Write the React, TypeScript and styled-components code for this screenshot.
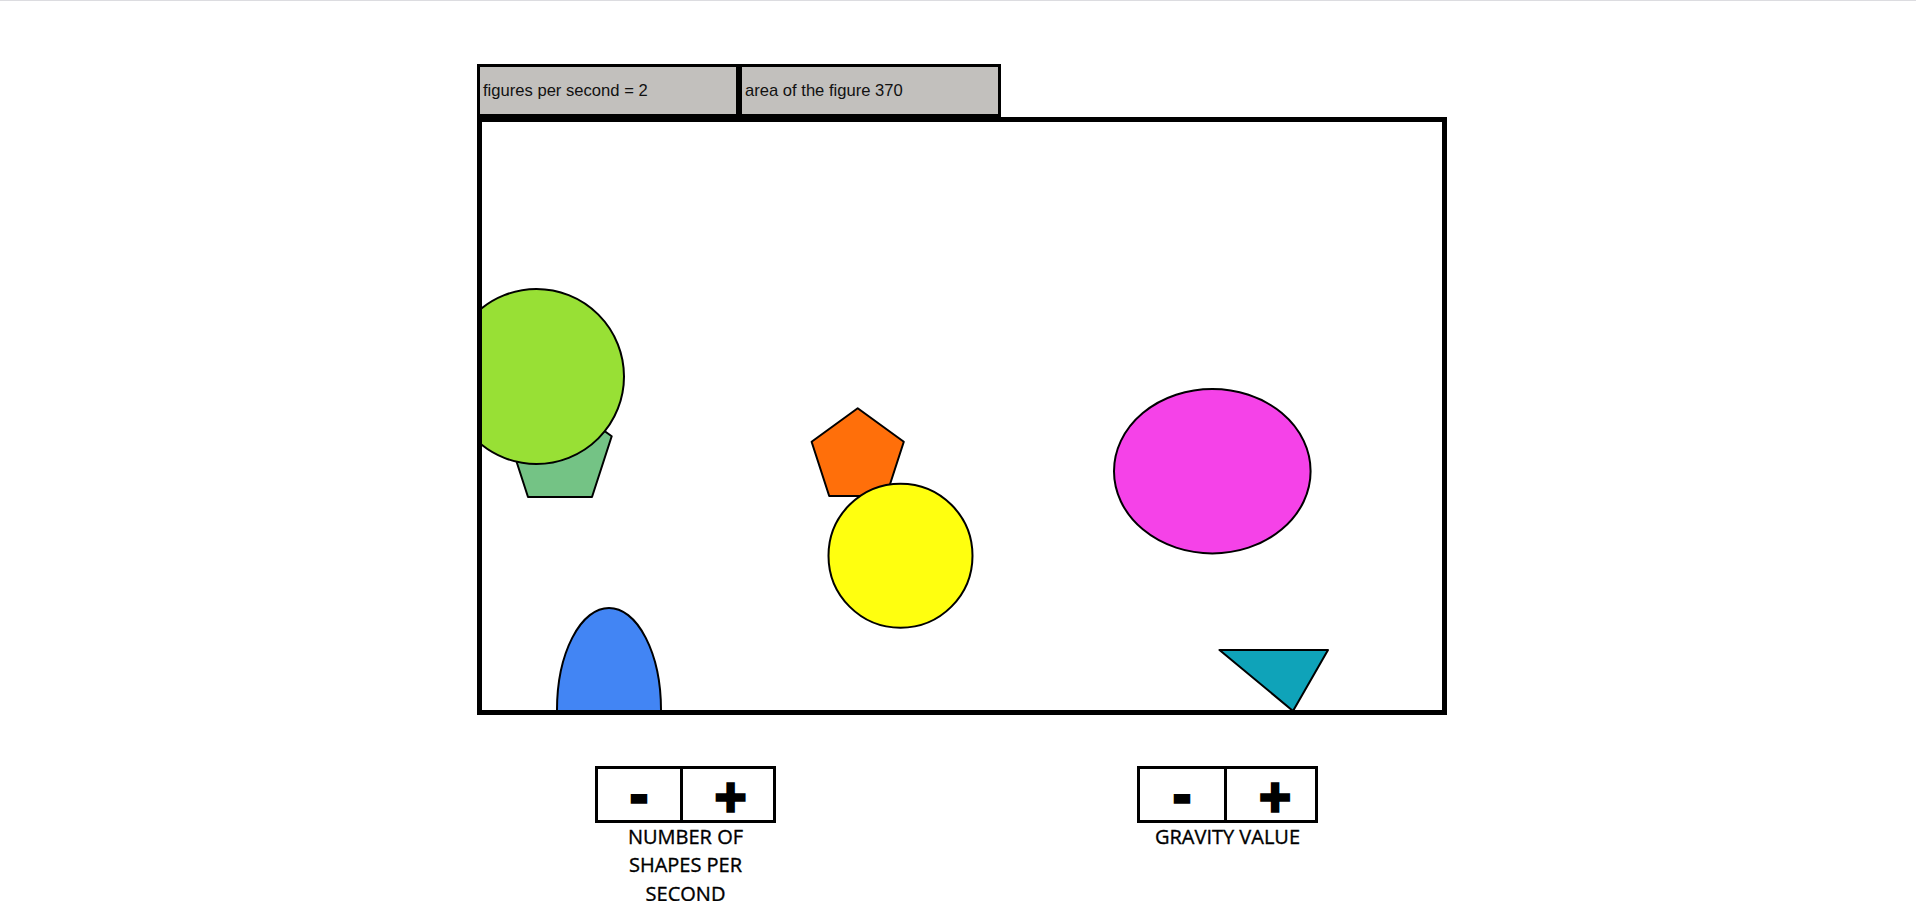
import React from "react";
import styled, { createGlobalStyle } from "styled-components";

const GlobalStyle = createGlobalStyle`
  html, body {
    margin: 0;
    padding: 0;
    background: #ffffff;
  }
  body {
    font-family: "Liberation Sans", Arial, sans-serif;
  }
`;

const TopRule = styled.div`
  height: 1px;
  background: #dcdce0;
`;

const Page = styled.main`
  padding: 63px 0 0 477px;
`;

const Stage = styled.section`
  width: 970px;
  display: flex;
  flex-direction: column;
`;

const InfoBar = styled.div`
  display: flex;
`;

const InfoBox = styled.div`
  box-sizing: border-box;
  width: 262px;
  height: 53px;
  border: 3px solid #000;
  background: #c2c0bd;
  display: flex;
  align-items: center;
  padding-left: 3px;
  font-family: "Liberation Sans", Arial, sans-serif;
  font-size: 16.6px;
  color: #111;
`;

const CanvasFrame = styled.div`
  box-sizing: border-box;
  width: 970px;
  height: 598px;
  border: 5px solid #000;
  background: #fff;
  overflow: hidden;
`;

const Controls = styled.div`
  display: flex;
  margin-top: 51px;
  padding-left: 118px;
  gap: 361px;
`;

const Control = styled.div`
  width: 181px;
  display: flex;
  flex-direction: column;
  align-items: center;
`;

const ButtonGroup = styled.div`
  box-sizing: border-box;
  width: 181px;
  height: 57px;
  border: 3px solid #000;
  display: flex;
`;

const StepButton = styled.button<{ $w: number; $divider?: boolean; $shift?: number }>`
  width: ${(p) => p.$w}px;
  height: 100%;
  box-sizing: border-box;
  margin: 0;
  padding: 5px 0 0 ${(p) => p.$shift ?? 0}px;
  border: none;
  border-left: ${(p) => (p.$divider ? "3px solid #000" : "none")};
  background: #fff;
  color: #000;
  font-family: "DejaVu Sans", sans-serif;
  font-weight: 700;
  font-size: 42px;
  line-height: 1;
  -webkit-text-stroke: 3.6px #000;
  display: flex;
  align-items: center;
  justify-content: center;
  cursor: pointer;
`;

const Label = styled.div`
  width: 181px;
  text-align: center;
  font-family: "Open Sans", "Noto Sans", sans-serif;
  font-weight: 400;
  font-size: 20px;
  line-height: 28.4px;
  color: #000;
  -webkit-text-stroke: 0.35px #000;
  text-transform: uppercase;
`;

const pent = (cx: number, cy: number, r: number) =>
  [-90, -18, 54, 126, 198]
    .map((a) => {
      const rad = (a * Math.PI) / 180;
      return `${(cx + r * Math.cos(rad)).toFixed(1)},${(cy + r * Math.sin(rad)).toFixed(1)}`;
    })
    .join(" ");

const Scene = () => (
  <svg width="960" height="588" viewBox="0 0 960 588" style={{ display: "block" }}>
    <g stroke="#000" strokeWidth="2" strokeLinejoin="round">
      <polygon points={pent(78, 331, 54.4)} fill="#74C385" />
      <circle cx="54.5" cy="254.5" r="87.5" fill="#98E035" />
      <polygon points={pent(375.7, 334.8, 48.5)} fill="#FF6F0A" />
      <circle cx="418.5" cy="433.7" r="72" fill="#FFFF0F" />
      <ellipse cx="127" cy="588" rx="52" ry="102" fill="#4285F4" />
      <ellipse cx="730.3" cy="349.2" rx="98.3" ry="82.2" fill="#F542E8" />
      <polygon points="737.5,528 846,528 811,589" fill="#0FA3B9" />
    </g>
  </svg>
);

export default function App() {
  return (
    <>
      <GlobalStyle />
      <TopRule />
      <Page>
        <Stage>
          <InfoBar>
            <InfoBox>figures per second = 2</InfoBox>
            <InfoBox>area of the figure 370</InfoBox>
          </InfoBar>
          <CanvasFrame>
            <Scene />
          </CanvasFrame>
        </Stage>
        <Controls>
          <Control>
            <ButtonGroup>
              <StepButton $w={82}>-</StepButton>
              <StepButton $w={90} $divider $shift={8}>+</StepButton>
            </ButtonGroup>
            <Label>Number of shapes per second</Label>
          </Control>
          <Control>
            <ButtonGroup>
              <StepButton $w={84}>-</StepButton>
              <StepButton $w={91} $divider $shift={8}>+</StepButton>
            </ButtonGroup>
            <Label>Gravity value</Label>
          </Control>
        </Controls>
      </Page>
    </>
  );
}
